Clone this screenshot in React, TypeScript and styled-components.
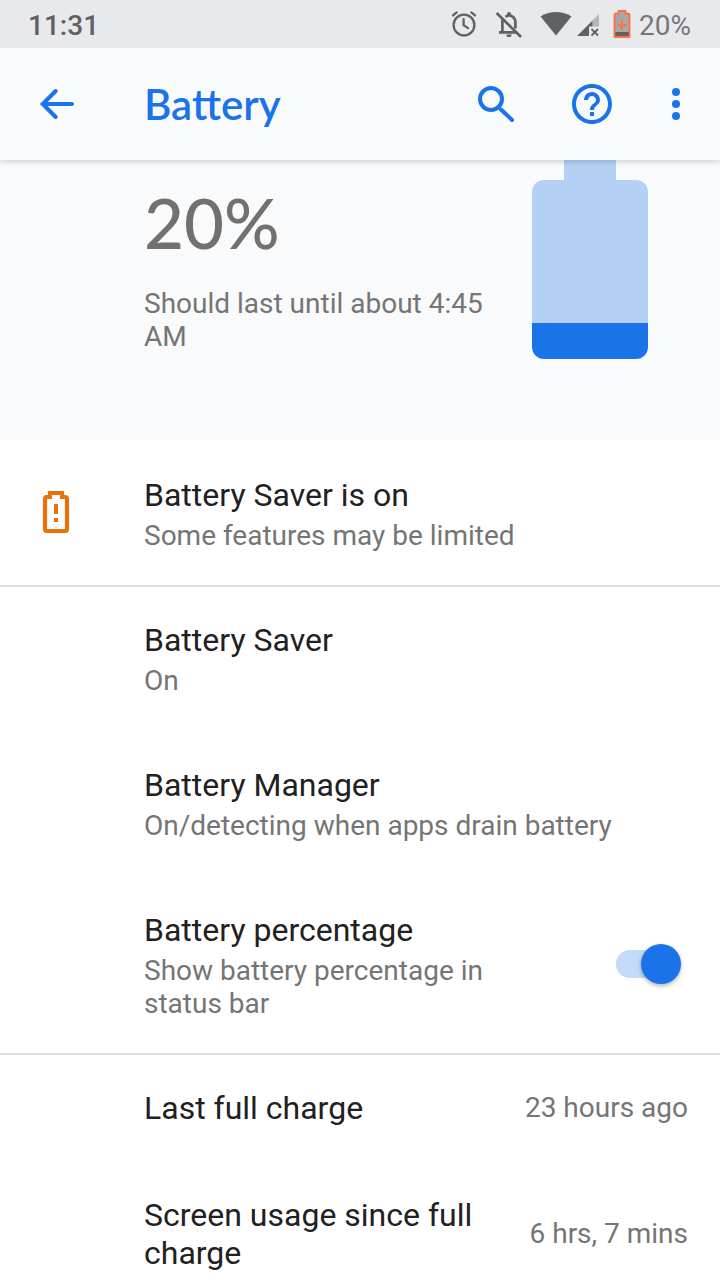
import React from "react";
import styled, { createGlobalStyle } from "styled-components";

const blue = "#1a73e8";
const grey = "#757575";

const GlobalStyle = createGlobalStyle`
  * { box-sizing: border-box; }
  body {
    margin: 0;
    background: #fff;
    color: #212121;
    font-family: Roboto, "Liberation Sans", sans-serif;
  }
`;

const Screen = styled.div`
  display: flex;
  flex-direction: column;
  height: 100vh;
  overflow: hidden;
`;

const StatusBar = styled.div`
  flex: none;
  position: relative;
  z-index: 2;
  display: flex;
  align-items: center;
  justify-content: space-between;
  height: 48px;
  padding: 2px 29px 0 28px;
  background: #e8e9ed;
  color: #5f6163;
  font-size: 28px;
  line-height: 33px;
`;

const Clock = styled.time`
  font-weight: 500;
`;

const StatusIcons = styled.div`
  display: flex;
  align-items: center;
  gap: 17px;
  color: #5f6163;

  svg {
    display: block;
    margin-bottom: 2px;
  }
`;

const Signals = styled.span`
  display: flex;
  gap: 4px;
`;

const BatteryStatus = styled.span`
  display: flex;
  align-items: center;
  gap: 8px;
  margin-left: -4px;
  color: #777;
`;

const AppBar = styled.header`
  flex: none;
  position: relative;
  z-index: 1;
  display: flex;
  align-items: center;
  height: 112px;
  padding: 0 20px 0 32px;
  background: #f8fafb;
  box-shadow: 0 1px 6px rgba(0, 0, 0, 0.22);
`;

const Title = styled.h1`
  flex: 1;
  margin: 0 0 0 64px;
  color: ${blue};
  font: 600 42px/48px Lato, "Liberation Sans", sans-serif;
`;

const IconButton = styled.button`
  width: 48px;
  height: 48px;
  padding: 0;
  border: 0;
  background: none;
  color: ${blue};
  cursor: pointer;

  svg { display: block; }
`;

const Actions = styled.div`
  display: flex;

  button + button { margin-left: 48px; }
  button:last-child { margin-left: 36px; }
`;

const Content = styled.main`
  flex: 1;
  min-height: 0;
  overflow-y: auto;
  scrollbar-width: none;
`;

const Summary = styled.section`
  display: flex;
  justify-content: space-between;
  height: 280px;
  padding: 0 72px 0 144px;
  background: #f8fafb;
`;

const Estimate = styled.div`
  padding: 21px 32px 0 0;
`;

const Percent = styled.p`
  margin: 0;
  color: #717171;
  font: 500 69px/84px Lato, "Liberation Sans", sans-serif;
`;

const Remaining = styled.p`
  margin: 22px 0 0;
  color: ${grey};
  font-size: 28px;
  line-height: 33px;
`;

const BatteryArt = styled.svg`
  flex: none;
  display: block;
  width: 116px;
  height: 200px;
`;

const List = styled.ul<{ $divided?: boolean }>`
  margin: 0;
  padding: 0;
  list-style: none;
  box-shadow: ${(p) => (p.$divided ? "inset 0 2px #dfdfdf" : "none")};
`;

const Row = styled.li`
  display: flex;
  align-items: center;
  padding-right: 32px;
`;

const IconSlot = styled.span`
  flex: none;
  width: 112px;
  padding-left: 32px;
  margin-right: 32px;

  svg { display: block; }
`;

const RowText = styled.div`
  flex: 1;
  min-width: 0;
  padding: 36px 32px 33px 0;
`;

const RowTitle = styled.div`
  font-size: 32px;
  line-height: 38px;
`;

const RowSummary = styled.div`
  margin-top: 5px;
  color: ${grey};
  font-size: 28px;
  line-height: 33px;
`;

const Value = styled.span`
  flex: none;
  padding-top: 2px;
  color: ${grey};
  font-size: 28px;
  line-height: 33px;
`;

const Switch = styled.input`
  flex: none;
  appearance: none;
  display: grid;
  align-items: center;
  width: 65px;
  height: 40px;
  margin: 0 7px 0 32px;
  cursor: pointer;

  &::before,
  &::after {
    content: "";
    grid-area: 1 / 1;
  }
  &::before {
    width: 56px;
    height: 28px;
    border-radius: 14px;
    background: #d5d5d5;
  }
  &::after {
    width: 40px;
    height: 40px;
    border-radius: 50%;
    background: #fafafa;
    box-shadow: 0 2px 4px rgba(0, 0, 0, 0.3);
  }
  &:checked::before { background: #c3dbf8; }
  &:checked::after {
    justify-self: end;
    background: ${blue};
  }
`;

const stroke = { fill: "none", stroke: "currentColor" } as const;

const AlarmIcon = () => (
  <svg width="28" height="28" viewBox="0 0 28 28" aria-hidden="true">
    <g {...stroke} strokeWidth="2.3" strokeLinecap="round">
      <circle cx="14" cy="15" r="10.4" />
      <path d="M13.6 9.2v6l4.4 2.9" />
      <path d="M3 5.4l3.6-3M25 5.4l-3.6-3" />
    </g>
  </svg>
);

const BellOffIcon = () => (
  <svg width="28" height="28" viewBox="0 0 28 28" aria-hidden="true">
    <g {...stroke} strokeWidth="2.7">
      <path d="M7.4 9.500V22.500M4 22.400H22" />
      <path d="M10.500 6.800C15 3.500 20.400 7 20.400 12.500V18.500" />
      <path d="M1.600 3L26 27" />
    </g>
    <path d="M12 6V4a2 2 0 0 1 4 0v2zM11.400 24.500h5.200a2.600 2.600 0 0 1-5.200 0z" fill="currentColor" />
  </svg>
);

const WifiIcon = () => (
  <svg width="32" height="28" viewBox="0 0 32 28" aria-hidden="true">
    <path d="M0.500 6.500C9 0.500 23 0.500 31.500 6.500L16 25.500z" fill="currentColor" />
  </svg>
);

const SignalIcon = () => (
  <svg width="24" height="28" viewBox="0 0 24 28" aria-hidden="true">
    <path d="M16.500 10.500L23 4V16.500H16.500z" fill="#b4b6b9" />
    <path d="M1 26L16.500 10.500V16.500H13V26z" fill="currentColor" />
    <path d="M15.500 19l6.500 6.500m0-6.500L15.500 25.500" {...stroke} strokeWidth="1.800" />
  </svg>
);

const SaverStatusIcon = () => (
  <svg width="18" height="28" viewBox="0 0 18 28" aria-hidden="true">
    <path d="M5.500 1H12.500V3.500H16.500V27H1.500V3.500H5.500z" fill="#a5a7aa" />
    <path d="M2 22H16V27H2z" fill="#5f6163" />
    <path d="M5.500 1H12.500V3.500H15.500L16.500 4.500V27H1.500V4.500L2.500 3.500H5.500z" fill="none" stroke="#ff7043" strokeWidth="1.800" strokeLinejoin="round" />
    <path d="M9 10.500V20M4.300 15.200H13.700" stroke="#ff7043" strokeWidth="2" />
  </svg>
);

const BackIcon = () => (
  <svg width="48" height="48" viewBox="0 0 48 48" aria-hidden="true">
    <path d="M40 24H11M23.700 11L10.700 24L23.700 37" {...stroke} strokeWidth="4" strokeLinecap="round" />
  </svg>
);

const SearchIcon = () => (
  <svg width="48" height="48" viewBox="0 0 48 48" aria-hidden="true">
    <circle cx="19" cy="19" r="11" {...stroke} strokeWidth="4" />
    <path d="M29 29.500L40 40" {...stroke} strokeWidth="4" strokeLinecap="round" />
  </svg>
);

const HelpIcon = () => (
  <svg width="48" height="48" viewBox="0 0 24 24" fill="currentColor" aria-hidden="true">
    <path d="M11 18h2v-2h-2v2zm1-16C6.480 2 2 6.480 2 12s4.480 10 10 10 10-4.480 10-10S17.520 2 12 2zm0 18c-4.410 0-8-3.590-8-8s3.590-8 8-8 8 3.590 8 8-3.590 8-8 8zm0-14c-2.210 0-4 1.790-4 4h2c0-1.100.9-2 2-2s2 .9 2 2c0 2-3 1.750-3 5h2c0-2.250 3-2.500 3-5 0-2.210-1.790-4-4-4z" />
  </svg>
);

const MoreIcon = () => (
  <svg width="48" height="48" viewBox="0 0 48 48" fill="currentColor" aria-hidden="true">
    <circle cx="24" cy="12" r="4" />
    <circle cx="24" cy="24" r="4" />
    <circle cx="24" cy="36" r="4" />
  </svg>
);

const AlertBatteryIcon = () => (
  <svg width="48" height="48" viewBox="0 0 48 48" aria-hidden="true">
    <path d="M13 8H18V4H30V8H33Q35 8 35 10V40Q35 42 33 42H15Q13 42 13 40V10Q13 8 15 8z" fill="none" stroke="#e8710a" strokeWidth="4.200" />
    <path d="M24 15V25M24 29V33" stroke="#e8710a" strokeWidth="4" />
  </svg>
);

export default function App() {
  return (
    <Screen>
      <GlobalStyle />
      <StatusBar>
        <Clock>11:31</Clock>
        <StatusIcons>
          <AlarmIcon />
          <BellOffIcon />
          <Signals>
            <WifiIcon />
            <SignalIcon />
          </Signals>
          <BatteryStatus>
            <SaverStatusIcon />
            20%
          </BatteryStatus>
        </StatusIcons>
      </StatusBar>

      <AppBar>
        <IconButton aria-label="Navigate up"><BackIcon /></IconButton>
        <Title>Battery</Title>
        <Actions>
          <IconButton aria-label="Search"><SearchIcon /></IconButton>
          <IconButton aria-label="Help"><HelpIcon /></IconButton>
          <IconButton aria-label="More options"><MoreIcon /></IconButton>
        </Actions>
      </AppBar>

      <Content>
        <Summary>
          <Estimate>
            <Percent>20%</Percent>
            <Remaining>Should last until about 4:45 AM</Remaining>
          </Estimate>
          <BatteryArt viewBox="0 0 116 200" role="img" aria-label="Battery level 20%">
            <clipPath id="cell">
              <rect y="20" width="116" height="179" rx="12" />
            </clipPath>
            <path d="M32 0H84V20H32z" fill="#b4d0f5" />
            <g clipPath="url(#cell)">
              <path d="M0 20H116V163H0z" fill="#b4d0f5" />
              <path d="M0 163H116V199H0z" fill={blue} />
            </g>
          </BatteryArt>
        </Summary>

        <List>
          <Row>
            <IconSlot><AlertBatteryIcon /></IconSlot>
            <RowText>
              <RowTitle>Battery Saver is on</RowTitle>
              <RowSummary>Some features may be limited</RowSummary>
            </RowText>
          </Row>
        </List>

        <List $divided>
          <Row>
            <IconSlot />
            <RowText>
              <RowTitle>Battery Saver</RowTitle>
              <RowSummary>On</RowSummary>
            </RowText>
          </Row>
          <Row>
            <IconSlot />
            <RowText>
              <RowTitle>Battery Manager</RowTitle>
              <RowSummary>On/detecting when apps drain battery</RowSummary>
            </RowText>
          </Row>
          <Row>
            <IconSlot />
            <RowText>
              <RowTitle as="label" htmlFor="battery-percentage">Battery percentage</RowTitle>
              <RowSummary>Show battery percentage in status bar</RowSummary>
            </RowText>
            <Switch id="battery-percentage" type="checkbox" role="switch" defaultChecked />
          </Row>
        </List>

        <List $divided>
          <Row>
            <IconSlot />
            <RowText>
              <RowTitle>Last full charge</RowTitle>
            </RowText>
            <Value>23 hours ago</Value>
          </Row>
          <Row>
            <IconSlot />
            <RowText>
              <RowTitle>Screen usage since full charge</RowTitle>
            </RowText>
            <Value>6 hrs, 7 mins</Value>
          </Row>
        </List>
      </Content>
    </Screen>
  );
}
